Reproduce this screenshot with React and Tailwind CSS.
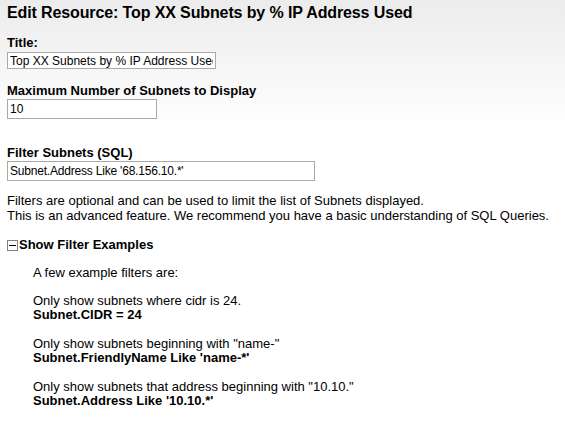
import React, { useState } from "react";

export default function App() {
  const [open, setOpen] = useState(true);

  return (
    <div
      className="min-h-[422px] w-[565px] bg-gradient-to-b from-[#ececec] to-white to-[130px] px-[7px] pt-[3px] text-[13px] text-black"
      style={{ fontFamily: '"Liberation Sans", Arial, sans-serif' }}
    >
      {/* Heading */}
      <h1 className="text-[16px] font-bold leading-[20px] tracking-[-0.12px] text-black">
        Edit Resource: Top XX Subnets by % IP Address Used
      </h1>

      {/* Title */}
      <div className="mt-[12px]">
        <label className="block text-[13px] font-bold leading-[16px]">Title:</label>
        <input
          type="text"
          defaultValue="Top XX Subnets by % IP Address Used"
          className="mt-[1px] block h-[17px] w-[209px] border border-[#a9a9a9] bg-white px-[2px] text-[12px] leading-[15px] text-black outline-none"
        />
      </div>

      {/* Maximum number */}
      <div className="mt-[14px]">
        <label className="block text-[13px] font-bold leading-[16px]">
          Maximum Number of Subnets to Display
        </label>
        <input
          type="text"
          defaultValue="10"
          className="block h-[20px] w-[150px] border border-[#a9a9a9] bg-white px-[2px] text-[12px] text-black outline-none"
        />
      </div>

      {/* Filter */}
      <div className="mt-[26px]">
        <label className="block text-[13px] font-bold leading-[16px]">
          Filter Subnets (SQL)
        </label>
        <input
          type="text"
          defaultValue="Subnet.Address Like '68.156.10.*'"
          className="block h-[20px] w-[308px] border border-[#a9a9a9] bg-white px-[2px] text-[12px] tracking-[-0.2px] text-black outline-none"
        />
      </div>

      <p className="mt-[12px] leading-[15px]">
        Filters are optional and can be used to limit the list of Subnets displayed.
        <br />
        This is an advanced feature. We recommend you have a basic understanding of SQL Queries.
      </p>

      {/* Examples toggle */}
      <button
        type="button"
        onClick={() => setOpen(!open)}
        className="mt-[14px] flex items-center text-[13px] font-bold leading-[16px] text-black"
      >
        <span className="mr-[1px] flex h-[11px] w-[11px] items-center justify-center border border-[#808080] bg-white">
          <span className="h-[1px] w-[7px] bg-black" />
        </span>
        Show Filter Examples
      </button>

      {open && (
        <div className="pl-[26px] leading-[14px]">
          <p className="mt-[13px]">A few example filters are:</p>

          <p className="mt-[14px]">Only show subnets where cidr is 24.</p>
          <p className="font-bold">Subnet.CIDR = 24</p>

          <p className="mt-[15px]">Only show subnets beginning with "name-"</p>
          <p className="font-bold">Subnet.FriendlyName Like 'name-*'</p>

          <p className="mt-[15px]">Only show subnets that address beginning with "10.10."</p>
          <p className="font-bold">Subnet.Address Like '10.10.*'</p>
        </div>
      )}
    </div>
  );
}
